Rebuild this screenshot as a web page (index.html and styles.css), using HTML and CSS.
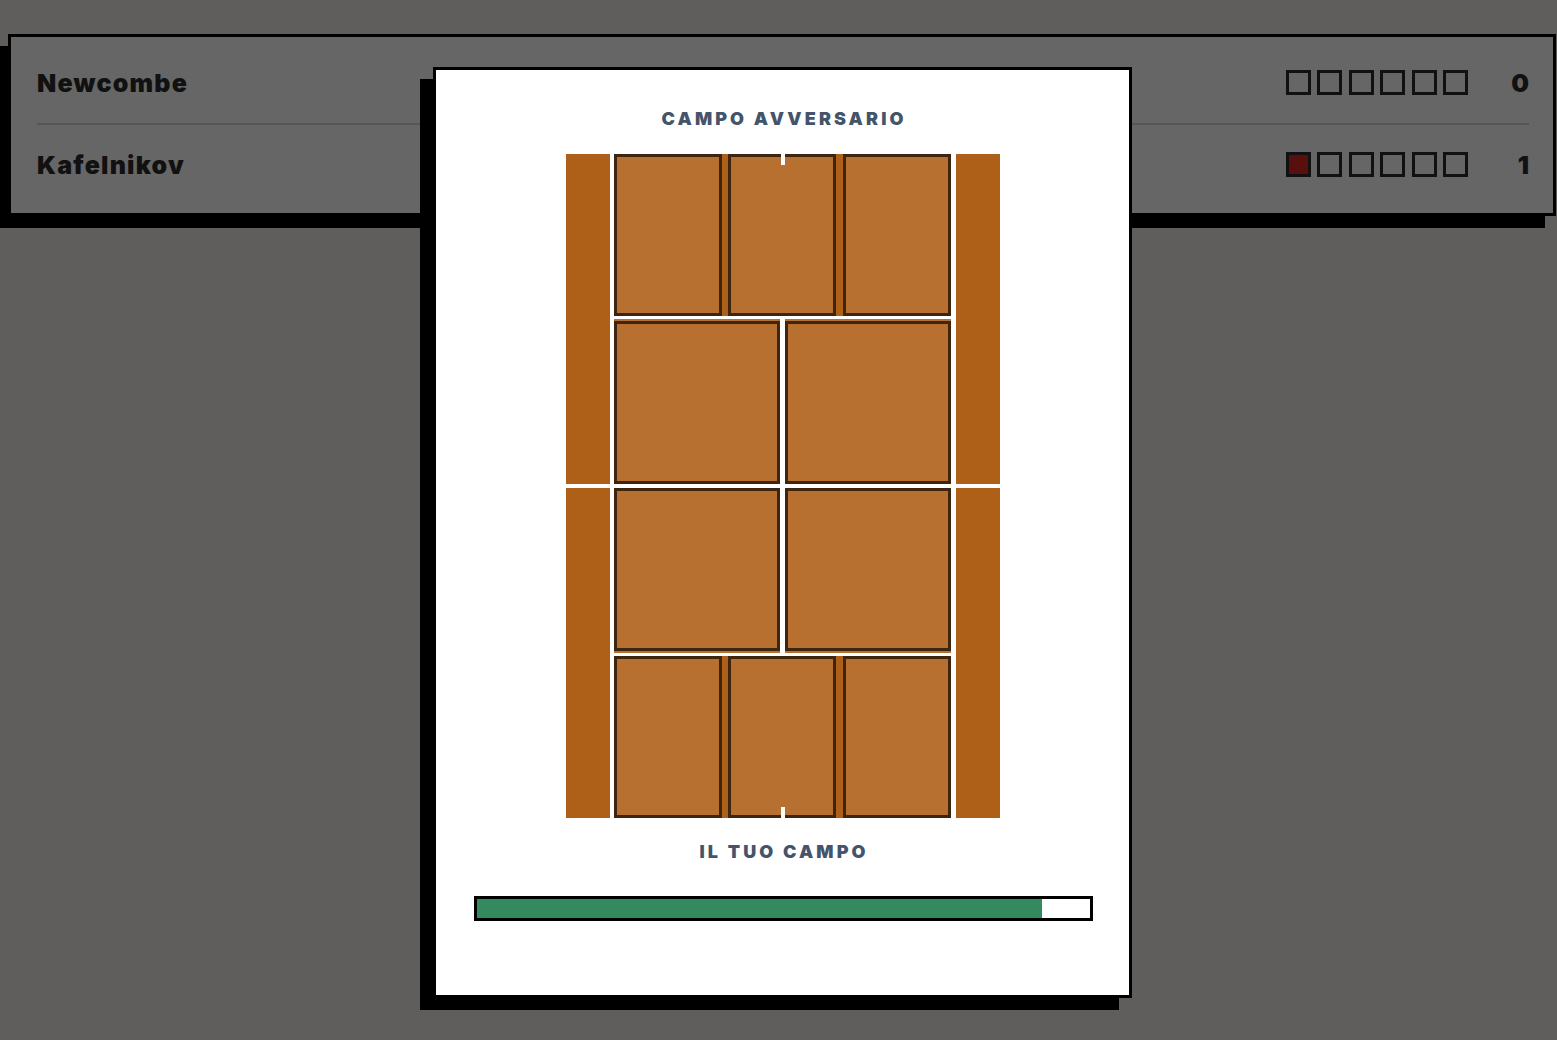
FILE: index.html
```html
<!DOCTYPE html>
<html>
	<head>
		<meta charset="utf-8">
		<title>Partita</title>

		<link rel="stylesheet" href="styles.css">
	</head>
	<body>
		<div class="board">
			<div class="player">
				<div class="name">Newcombe</div>
				<div class="games">
					<span class="game"></span>
					<span class="game"></span>
					<span class="game"></span>
					<span class="game"></span>
					<span class="game"></span>
					<span class="game"></span>
				</div>
				<div class="score">0</div>
			</div>
			<div class="player">
				<div class="name">Kafelnikov</div>
				<div class="games">
					<span class="game won"></span>
					<span class="game"></span>
					<span class="game"></span>
					<span class="game"></span>
					<span class="game"></span>
					<span class="game"></span>
				</div>
				<div class="score">1</div>
			</div>
		</div>

		<div class="modal">
			<div class="label">CAMPO AVVERSARIO</div>

			<div class="court">
				<div class="alley">
					<div class="alley-part"></div>
					<div class="alley-part"></div>
				</div>
				<div class="middle">
					<div class="row-back">
						<div class="zone"></div>
						<div class="zone"></div>
						<div class="zone"></div>
					</div>
					<div class="row-service top">
						<div class="cell"><div class="zone"></div></div>
						<div class="cell"><div class="zone"></div></div>
					</div>
					<div class="net"></div>
					<div class="row-service bottom">
						<div class="cell"><div class="zone"></div></div>
						<div class="cell"><div class="zone"></div></div>
					</div>
					<div class="row-back">
						<div class="zone"></div>
						<div class="zone"></div>
						<div class="zone"></div>
					</div>
				</div>
				<div class="alley right">
					<div class="alley-part"></div>
					<div class="alley-part"></div>
				</div>
				<div class="mark mark-top"></div>
				<div class="mark mark-bottom"></div>
			</div>

			<div class="label">IL TUO CAMPO</div>

			<div class="progress">
				<div class="fill" style="width: 92.2%"></div>
			</div>
		</div>
	</body>
</html>
```

FILE: styles.css
```css
* {
	margin: 0;
	padding: 0;
	box-sizing: border-box;
}

html,
body {
	height: 100%;
}

body {
	background: #5f5e5c;
	font-family: "Inter", "Liberation Sans", sans-serif;
	color: #111111;
	padding-top: 34px;
}

.board {
	margin: 0 1px 0 8px;
	padding: 5px 24px 7px 26px;
	background: #666666;
	border: 3px solid #000000;
	box-shadow: -11px 12px 0 0 #000000;
}

.player {
	height: 81px;
	display: flex;
	align-items: center;
}

.player + .player {
	border-top: 2px solid #555555;
	height: 83px;
	padding-bottom: 2px;
}

.name {
	flex: 1;
	font-size: 25px;
	font-weight: 900;
	letter-spacing: 1.2px;
}

.games {
	display: flex;
	gap: 6.4px;
}

.game {
	width: 25px;
	height: 25px;
	border: 3px solid #111111;
}

.game.won {
	background: #5a0f0f;
}

.score {
	width: 40px;
	margin-left: 21px;
	text-align: right;
	font-size: 25px;
	font-weight: 900;
}

.modal {
	position: absolute;
	left: 433px;
	top: 67px;
	width: 699px;
	height: 931px;
	background: #ffffff;
	border: 3px solid #000000;
	box-shadow: -13px 12px 0 #000000;
	padding-top: 39px;
}

.label {
	height: 20px;
	line-height: 20px;
	text-align: center;
	font-size: 18px;
	font-weight: 900;
	letter-spacing: 3.1px;
	text-indent: 3.1px;
	color: #44546a;
}

.court {
	position: relative;
	width: 434px;
	height: 664px;
	margin: 25px auto 24px;
	background: #ffffff;
	display: flex;
}

.alley {
	width: 44px;
	display: flex;
	flex-direction: column;
	gap: 4px;
}

.alley-part {
	flex: 1;
	background: #ae5f18;
}

.middle {
	width: 337px;
	margin: 0 5px 0 4px;
	display: flex;
	flex-direction: column;
}

.zone {
	background: #b87031;
	border: 3px solid #3d2510;
}

.row-back {
	height: 162px;
	display: flex;
	justify-content: space-between;
	background: #ae5f18;
}

.row-back .zone {
	width: 108px;
}

.row-service {
	height: 165px;
	display: flex;
	justify-content: space-between;
}

.row-service.top {
	margin-top: 3px;
}

.row-service.bottom {
	margin-bottom: 3px;
}

.cell {
	width: 166px;
	display: flex;
	flex-direction: column;
	background: #b87031;
}

.top .cell {
	padding-top: 2px;
}

.bottom .cell {
	padding-bottom: 2px;
}

.cell .zone {
	flex: 1;
}

.net {
	height: 4px;
}

.mark {
	position: absolute;
	left: 215px;
	width: 4px;
	height: 11px;
	background: #ffffff;
}

.mark-top {
	top: 0;
}

.mark-bottom {
	bottom: 0;
}

.progress {
	width: 619px;
	height: 25px;
	margin: 34px 0 0 38px;
	border: 3px solid #000000;
	background: #ffffff;
}

.fill {
	height: 100%;
	background: #328a5e;
}
```
